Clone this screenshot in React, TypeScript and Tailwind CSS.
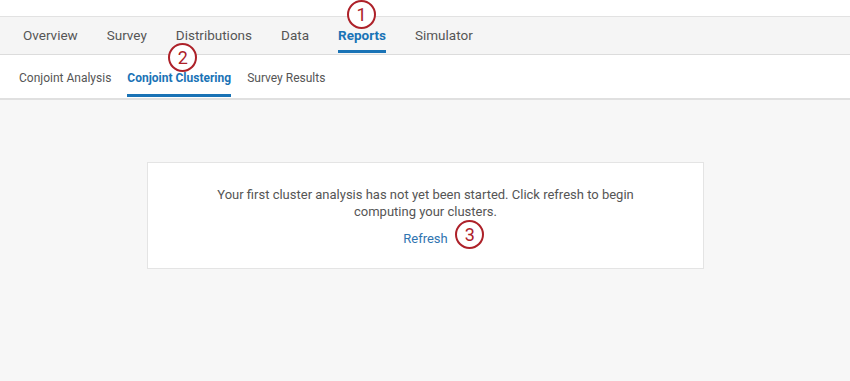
import React from "react";

const topTabs = ["Overview", "Survey", "Distributions", "Data", "Reports", "Simulator"];
const subTabs = ["Conjoint Analysis", "Conjoint Clustering", "Survey Results"];

function Badge({ n, className }: { n: string; className: string }) {
  return (
    <span
      className={`absolute flex items-center justify-center w-[29px] h-[29px] rounded-full border-[2.5px] border-[#ad2129] bg-white text-[#ad2129] text-[18px] leading-none ${className}`}
    >
      {n}
    </span>
  );
}

export default function App() {
  return (
    <div className="relative w-[850px] h-[381px] bg-[#f7f7f7] overflow-hidden font-['Roboto',sans-serif]">
      {/* strip above the main tabs */}
      <div className="h-[17px] bg-white border-b border-[#e2e2e2]" />

      {/* main tabs */}
      <div className="h-[38px] bg-[#f5f5f5] border-b border-[#dcdcdc] flex pl-[23px] gap-[29px]">
        {topTabs.map((t) => {
          const active = t === "Reports";
          return (
            <div key={t} className="relative flex items-center h-full">
              <span
                className={`text-[13.5px] ${active ? "font-bold text-[#1a73b6]" : "text-[#555]"}`}
              >
                {t}
              </span>
              {active && <span className="absolute left-0 right-0 bottom-[1px] h-[3px] bg-[#1a73b6]" />}
              {active && <Badge n="1" className="left-[9px] top-[-17px]" />}
            </div>
          );
        })}
      </div>

      {/* sub tabs */}
      <div className="h-[45px] bg-white border-b-2 border-[#e0e0e0] flex pl-[19px] gap-[16px]">
        {subTabs.map((t) => {
          const active = t === "Conjoint Clustering";
          return (
            <div key={t} className="relative flex items-center h-full pt-[3px]">
              <span className={`text-[12px] ${active ? "font-bold text-[#1a73b6]" : "text-[#555]"}`}>{t}</span>
              {active && <span className="absolute left-0 right-0 bottom-[1px] h-[3px] bg-[#1a73b6]" />}
              {active && <Badge n="2" className="left-[41px] top-[-12px]" />}
            </div>
          );
        })}
      </div>

      {/* body */}
      <div className="pt-[62px] pl-[147px]">
        <div className="w-[557px] h-[107px] bg-white border border-[#e4e4e4] flex flex-col items-center pt-[23px]">
          <p className="text-[13px] leading-[17px] text-[#555] text-center w-[440px]">
            Your first cluster analysis has not yet been started. Click refresh to begin computing your clusters.
          </p>
          <div className="relative mt-[6px]">
            <span className="text-[13px] text-[#2f74b0]">Refresh</span>
            <Badge n="3" className="left-[52px] top-[-6px]" />
          </div>
        </div>
      </div>
    </div>
  );
}
